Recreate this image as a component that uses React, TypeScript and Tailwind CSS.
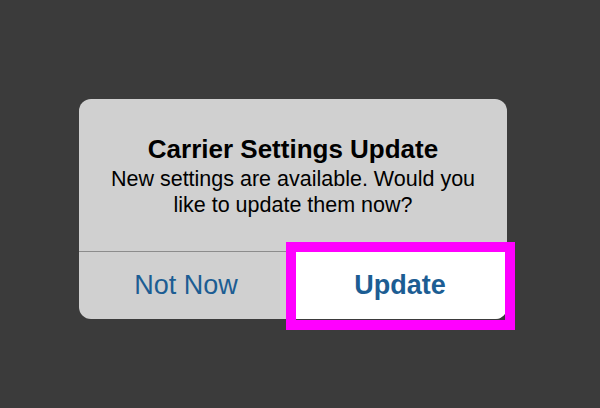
export default function App() {
  return (
    <div
      className="w-[600px] h-[408px] bg-[#3b3b3b] pl-[79px] pt-[99px]"
      style={{ fontFamily: '"Liberation Sans", Arial, sans-serif' }}
    >
      <div className="relative w-[428px]">
        {/* Alert */}
        <div className="w-[428px] h-[220px] rounded-[12px] bg-[#d0d0d0] overflow-hidden flex flex-col">
          <div className="h-[152px] pt-[35px] flex flex-col items-center text-black">
            <div className="text-[26px] leading-[30px] font-bold">Carrier Settings Update</div>
            <div className="mt-[2px] text-[21.5px] leading-[26px] text-center w-[400px]">
              New settings are available. Would you like to update them now?
            </div>
          </div>
          <div className="h-px bg-[#8c8c8c]" />
          <div className="flex-1 grid grid-cols-2">
            <button className="text-[27px] leading-[67px] text-[#1c5d93]">Not Now</button>
            <button className="bg-white text-[27px] leading-[67px] font-bold text-[#1c5d93]">Update</button>
          </div>
        </div>

        {/* Highlight */}
        <div className="absolute left-[207px] top-[143px] w-[229px] h-[88px] border-[10px] border-[#ff00ff] pointer-events-none" />
      </div>
    </div>
  );
}
